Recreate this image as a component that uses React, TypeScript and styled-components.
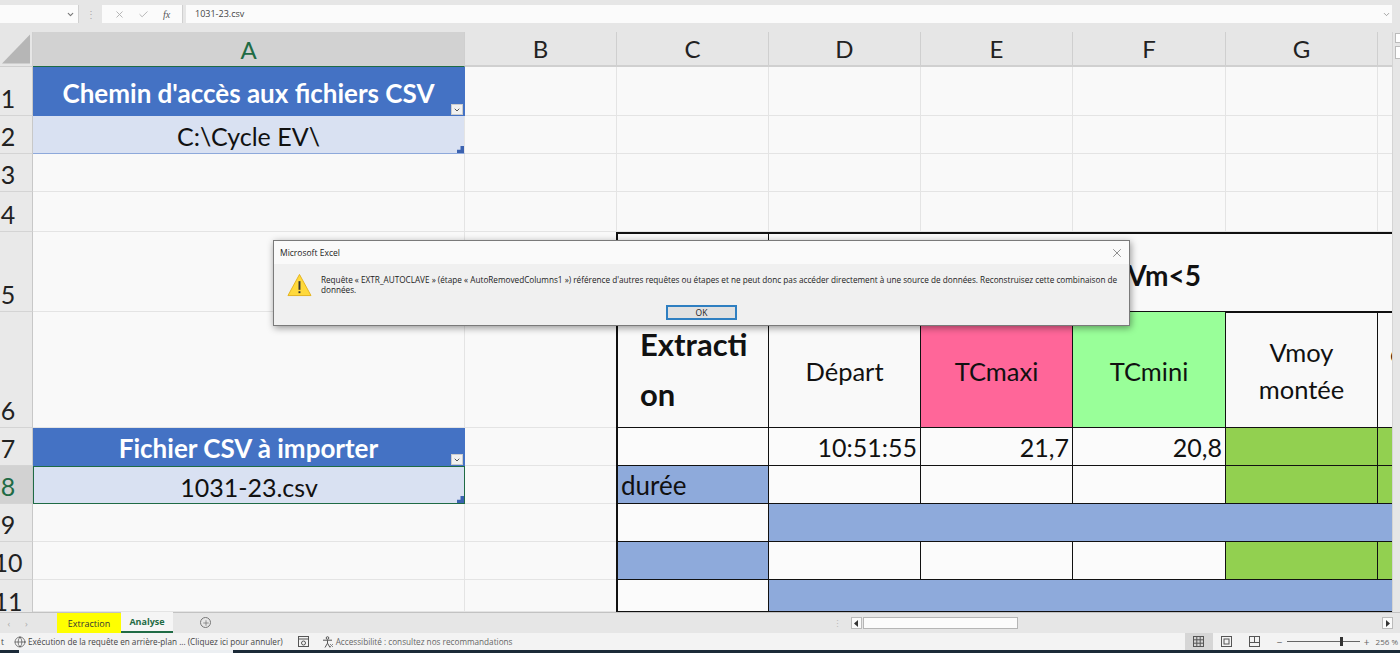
import React from "react";
import styled, { createGlobalStyle } from "styled-components";
import { Check, ChevronDown, Globe, Plus, X } from "lucide-react";

const GlobalStyle = createGlobalStyle`
	html, body {
		margin: 0;
		padding: 0;
		height: 653px;
		overflow: hidden;
		background: #e6e6e6;
	}
	* {
		box-sizing: border-box;
	}
`;

const Window = styled.div`
	position: relative;
	width: 1400px;
	height: 653px;
	display: flex;
	flex-direction: column;
	font-family: "Open Sans", "Liberation Sans", sans-serif;
	overflow: hidden;
`;

/* formula bar */
const FormulaBar = styled.div`
	height: 32px;
	flex: none;
	display: flex;
	align-items: flex-start;
	padding: 5px 8px 0 0;
	background: #e6e6e6;
`;

const NameBox = styled.div`
	width: 79px;
	height: 18px;
	background: #fbfbfb;
	border-right: 1px solid #d0d0d0;
	display: flex;
	align-items: center;
	justify-content: flex-end;
	padding-right: 3px;
	color: #777;
`;

const Grip = styled.div`
	width: 23px;
	height: 18px;
	display: flex;
	justify-content: center;
	align-items: center;
	color: #aaa;
	font-size: 10px;
`;

const FormulaButtons = styled.div`
	width: 81px;
	height: 18px;
	background: #fbfbfb;
	border-right: 1px solid #d0d0d0;
	display: flex;
	align-items: center;
	justify-content: space-around;
	padding: 0 5px;
	color: #b0b0b0;
`;

const FxLabel = styled.span`
	font-family: "Liberation Serif", serif;
	font-style: italic;
	font-size: 10px;
	color: #555;
`;

const FormulaInput = styled.div`
	flex: 1;
	height: 18px;
	margin-left: 3px;
	padding-left: 9px;
	background: #fbfbfb;
	font-size: 9px;
	line-height: 18px;
	color: #444;
	display: flex;
	justify-content: space-between;
	align-items: center;
	padding-right: 1px;
`;

/* sheet */
const SheetArea = styled.div`
	height: 580px;
	flex: none;
	display: flex;
`;

const Sheet = styled.div`
	width: 1392px;
	display: grid;
	grid-template-columns: 33px 432px 152px 152px 152px 152px 153px 152px 16px;
	grid-template-rows: 35px 49px 38px 38px 40px 80px 116px 38px 38px 38px 38px 32px;
	background: #f9f9f9;
	font-family: Lato, "Liberation Sans", sans-serif;
	overflow: hidden;
`;

const Corner = styled.div`
	background: #e6e6e6;
	border-right: 1px solid #cfcfcf;
	border-bottom: 1px solid #cfcfcf;
	display: flex;
	align-items: flex-end;
	justify-content: flex-end;
	padding: 2px;
`;

const ColumnHeader = styled.div<{ $active?: boolean }>`
	display: flex;
	align-items: center;
	justify-content: center;
	font-size: 24px;
	background: ${p => (p.$active ? "#d2d2d2" : "#e6e6e6")};
	color: ${p => (p.$active ? "#1f6b45" : "#222")};
	border-right: 1px solid #cfcfcf;
	border-bottom: ${p => (p.$active ? "1px solid #1f6b45" : "2px solid #d0d0d0")};
`;

const RowHeader = styled.div<{ $active?: boolean }>`
	display: flex;
	align-items: flex-end;
	justify-content: center;
	padding-right: 16px;
	font-size: 25px;
	line-height: 33px;
	overflow: hidden;
	background: ${p => (p.$active ? "#d2d2d2" : "#e9e9e9")};
	color: ${p => (p.$active ? "#1f6b45" : "#222")};
	border-right: 1px solid #c8c8c8;
	border-bottom: 1px solid #d4d4d4;
`;

/* last visible row runs on below the tabs, so its number sits low and is cut */
const LastRowHeader = styled(RowHeader)`
	align-items: flex-start;
	padding-top: 5px;
	border-bottom: none;
`;

const Cell = styled.div<{
	$bg?: string;
	$span?: number;
	$edge?: boolean;
	$box?: boolean;
	$thickTop?: boolean;
	$thickBottom?: boolean;
}>`
	position: relative;
	display: flex;
	align-items: center;
	font-size: 25px;
	color: #111;
	overflow: hidden;
	background: ${p => p.$bg || "transparent"};
	grid-column: span ${p => p.$span || 1};
	border-right: 1px solid ${p => (p.$box ? "#111" : "#e4e4e4")};
	border-bottom: 1px solid ${p => (p.$box ? "#111" : "#e4e4e4")};
	${p => p.$edge && "border-left: 2px solid #111; margin-left: -1px;"}
	${p => p.$thickTop && "border-top: 2px solid #111;"}
	${p => p.$thickBottom && "border-bottom: 2px solid #111; margin-bottom: -1px;"}
`;

const TableTitle = styled(Cell)`
	justify-content: center;
	background: #4472c4;
	color: #fff;
	font-weight: 700;
	font-size: 26px;
	border-color: #4472c4;
	padding-top: 3px;
`;

const TableEntry = styled(Cell)<{ $selected?: boolean }>`
	justify-content: center;
	background: #d9e1f2;
	font-size: 25px;
	padding-top: 3px;
	border-bottom: ${p => (p.$selected ? "1.5px solid #1f6b45" : "1px solid #8ea9db")};
	${p => p.$selected && "border-top: 1.5px solid #1f6b45; border-left: 1.5px solid #1f6b45; border-right: 1.5px solid #1f6b45;"}
`;

const FilterButton = styled.span`
	position: absolute;
	right: 1px;
	bottom: 0;
	width: 12px;
	height: 11px;
	background: #f1f1f1;
	border: 1px solid #ccc;
	color: #555;
	display: flex;
	align-items: center;
	justify-content: center;
`;

const ResizeHandle = styled.span`
	position: absolute;
	right: 0;
	bottom: 0;
	width: 7px;
	height: 7px;
	background: #3b62b0;
	clip-path: polygon(100% 0, 100% 100%, 0 100%, 0 55%, 50% 55%, 50% 0);
`;

const MergedTitle = styled(Cell)`
	justify-content: flex-end;
	padding-right: 192px;
	padding-top: 4px;
	font-size: 28px;
	font-weight: 700;
	color: #111;
`;

const BoldWrapped = styled(Cell)`
	font-size: 31px;
	font-weight: 700;
	line-height: 50px;
	padding: 0 0 2px 22px;
	white-space: nowrap;
`;

const ColumnTitle = styled(Cell)`
	justify-content: center;
	text-align: center;
	font-size: 25.5px;
	line-height: 37px;
	padding-top: 3px;
`;

const Value = styled(Cell)`
	justify-content: flex-end;
	padding-right: 3px;
`;

const LabelCell = styled(Cell)`
	padding-left: 3px;
	font-size: 26px;
`;

const ClippedTitle = styled(Cell)`
	padding: 0 0 33px 12px;
	font-size: 25.5px;
	white-space: nowrap;
`;

/* vertical scrollbar */
const VerticalBar = styled.div`
	width: 8px;
	background: #e6e6e6;
	border-left: 1px solid #d4d4d4;
	display: flex;
	flex-direction: column;
	gap: 3px;
	padding: 1px 0 0 2px;
`;

const VerticalThumb = styled.div<{ $size: number }>`
	height: ${p => p.$size}px;
	background: #fff;
	border: 1px solid #bbb;
	border-right: none;
`;

/* sheet tabs */
const TabsBar = styled.div`
	height: 21px;
	flex: none;
	display: flex;
	align-items: stretch;
	background: #e6e6e6;
	border-top: 1px solid #c2c2c2;
	padding-right: 7px;
`;

const TabArrows = styled.div`
	width: 57px;
	display: flex;
	justify-content: space-around;
	align-items: center;
	padding-right: 22px;
	color: #aaa;
	font-size: 9px;
`;

const SheetTab = styled.div<{ $active?: boolean; $yellow?: boolean }>`
	display: flex;
	align-items: center;
	justify-content: center;
	width: ${p => (p.$active ? "52px" : "64px")};
	font-family: "Open Sans", "Liberation Sans", sans-serif;
	font-size: 9px;
	color: ${p => (p.$active ? "#1f6b45" : "#333")};
	font-weight: ${p => (p.$active ? 700 : 400)};
	background: ${p => (p.$yellow ? "#ffff00" : p.$active ? "#f5f5f5" : "transparent")};
	border-bottom: ${p => (p.$active ? "2px solid #1f6b45" : "none")};
	margin-top: ${p => (p.$active ? "-1px" : "0")};
`;

const AddSheet = styled.div`
	width: 11px;
	height: 11px;
	margin: 4px 0 0 27px;
	border: 1px solid #777;
	border-radius: 50%;
	color: #666;
	display: flex;
	align-items: center;
	justify-content: center;
`;

const ScrollDots = styled.div`
	margin-left: 622px;
	width: 18px;
	color: #bbb;
	font-size: 9px;
	display: flex;
	align-items: center;
`;

const HorizontalTrack = styled.div`
	flex: 1;
	display: flex;
	align-items: center;
`;

const ArrowButton = styled.div`
	width: 11px;
	height: 12px;
	background: #fafafa;
	border: 1px solid #bbb;
	display: flex;
	align-items: center;
	justify-content: center;
`;

const Thumb = styled.div`
	width: 155px;
	height: 12px;
	background: #fbfbfb;
	border: 1px solid #b5b5b5;
	margin-left: 1px;
`;

const Spacer = styled.div`
	flex: 1;
`;

/* status bar */
const StatusBar = styled.div`
	height: 17px;
	flex: none;
	display: flex;
	align-items: center;
	padding-right: 2px;
	background: #f3f3f3;
	font-size: 8.2px;
	color: #444;
	white-space: nowrap;
`;

const StatusLead = styled.span`
	width: 14px;
	padding-left: 1px;
`;

const StatusText = styled.span<{ $muted?: boolean }>`
	color: ${p => (p.$muted ? "#666" : "#444")};
	margin-left: 2px;
`;

const StatusIcon = styled.span<{ $gap: number }>`
	display: flex;
	margin-left: ${p => p.$gap}px;
	color: #555;
`;

const ViewButton = styled.div<{ $active?: boolean }>`
	width: 28px;
	height: 17px;
	display: flex;
	align-items: center;
	justify-content: center;
	background: ${p => (p.$active ? "#d6d6d6" : "transparent")};
`;

const ZoomSlider = styled.div`
	position: relative;
	width: 73px;
	height: 1px;
	margin: 0 3px;
	background: #666;
`;

const ZoomThumb = styled.span`
	position: absolute;
	left: 53px;
	top: -4px;
	width: 3px;
	height: 9px;
	background: #333;
`;

const ZoomSign = styled.span`
	color: #666;
	font-size: 10px;
	width: 8px;
	text-align: center;
`;

const ZoomValue = styled.span`
	margin-left: 5px;
	font-size: 8px;
	color: #666;
`;

const Views = styled.div`
	margin-left: auto;
	display: flex;
	margin-right: 7px;
`;

/* task bar */
const TaskBar = styled.div`
	height: 3px;
	flex: none;
	display: flex;
	background: #1b2a38;
`;

const TaskWindow = styled.div`
	width: 214px;
	margin-left: 19px;
	background: #eceff2;
`;

/* dialog */
const Dialog = styled.div`
	position: absolute;
	left: 273px;
	top: 240px;
	width: 857px;
	height: 86px;
	background: #f0f0f0;
	border: 1px solid #7a7a7a;
	box-shadow: 1px 2px 7px rgba(0, 0, 0, 0.4);
	display: flex;
	flex-direction: column;
	z-index: 5;
`;

const DialogTitle = styled.div`
	height: 23px;
	flex: none;
	display: flex;
	align-items: center;
	justify-content: space-between;
	padding: 0 5px 0 6px;
	background: #fafafa;
	font-size: 8.5px;
	color: #222;
`;

const DialogBody = styled.div`
	display: flex;
	padding: 9px 8px 0 13px;
	height: 40px;
`;

const DialogMessage = styled.p`
	margin: 2px 0 0 9px;
	font-size: 8.2px;
	line-height: 10px;
	color: #222;
`;

const DialogFooter = styled.div`
	display: flex;
	justify-content: center;
	padding: 1px 0 0 0;
`;

const OkButton = styled.button`
	width: 71px;
	height: 15px;
	padding: 0;
	background: #e1e1e1;
	border: 2px solid #2f7fc1;
	font-family: inherit;
	font-size: 8.5px;
	color: #222;
`;

const PINK = "#ff6699";
const MINT = "#99ff99";
const GREEN = "#92d050";
const BLUE = "#8eaadb";
const WHITE = "#fbfbfb";

function FilterMark() {
	return (
		<FilterButton>
			<ChevronDown size={8} strokeWidth={3} />
		</FilterButton>
	);
}

function BlankCells({ count }: { count: number }) {
	return (
		<>
			{Array.from({ length: count }).map((_, i) => (
				<Cell key={i} />
			))}
		</>
	);
}

function App() {
	return (
		<Window>
			<GlobalStyle />
			<FormulaBar>
				<NameBox>
					<ChevronDown size={9} strokeWidth={3} />
				</NameBox>
				<Grip>⋮</Grip>
				<FormulaButtons>
					<X size={11} />
					<Check size={11} />
					<FxLabel>fx</FxLabel>
				</FormulaButtons>
				<FormulaInput>
					1031-23.csv
					<ChevronDown size={9} color="#888" />
				</FormulaInput>
			</FormulaBar>

			<SheetArea>
				<Sheet>
					<Corner>
						<svg width="29" height="30" viewBox="0 0 29 30">
							<polygon points="29,0 29,30 0,30" fill="#b6b6b6" />
						</svg>
					</Corner>
					<ColumnHeader $active>A</ColumnHeader>
					{["B", "C", "D", "E", "F", "G"].map(c => (
						<ColumnHeader key={c}>{c}</ColumnHeader>
					))}
					<ColumnHeader />

					<RowHeader>1</RowHeader>
					<TableTitle>
						Chemin d'accès aux fichiers CSV
						<FilterMark />
					</TableTitle>
					<BlankCells count={7} />

					<RowHeader>2</RowHeader>
					<TableEntry>
						C:\Cycle EV\
						<ResizeHandle />
					</TableEntry>
					<BlankCells count={7} />

					<RowHeader>3</RowHeader>
					<BlankCells count={8} />

					<RowHeader>4</RowHeader>
					<BlankCells count={8} />

					<RowHeader>5</RowHeader>
					<Cell />
					<Cell />
					<Cell $edge $box $thickTop />
					<MergedTitle $span={5} $thickTop $thickBottom $box>
						Vm&lt;5
					</MergedTitle>

					<RowHeader>6</RowHeader>
					<Cell />
					<Cell />
					<BoldWrapped $edge $box>
						Extracti
						<br />
						on
					</BoldWrapped>
					<ColumnTitle $box>Départ</ColumnTitle>
					<ColumnTitle $box $bg={PINK}>
						TCmaxi
					</ColumnTitle>
					<ColumnTitle $box $bg={MINT}>
						TCmini
					</ColumnTitle>
					<ColumnTitle $box>
						Vmoy
						<br />
						montée
					</ColumnTitle>
					<ClippedTitle $box>c</ClippedTitle>

					<RowHeader>7</RowHeader>
					<TableTitle>
						Fichier CSV à importer
						<FilterMark />
					</TableTitle>
					<Cell />
					<Cell $edge $box $bg={WHITE} />
					<Value $box $bg={WHITE}>
						10:51:55
					</Value>
					<Value $box $bg={WHITE}>
						21,7
					</Value>
					<Value $box $bg={WHITE}>
						20,8
					</Value>
					<Cell $box $bg={GREEN} />
					<Cell $box $bg={GREEN} />

					<RowHeader $active>8</RowHeader>
					<TableEntry $selected>
						1031-23.csv
						<ResizeHandle />
					</TableEntry>
					<Cell />
					<LabelCell $edge $box $bg={BLUE}>
						durée
					</LabelCell>
					<Cell $box $bg={WHITE} />
					<Cell $box $bg={WHITE} />
					<Cell $box $bg={WHITE} />
					<Cell $box $bg={GREEN} />
					<Cell $box $bg={GREEN} />

					<RowHeader>9</RowHeader>
					<Cell />
					<Cell />
					<Cell $edge $box $bg={WHITE} />
					<Cell $span={5} $box $bg={BLUE} />

					<RowHeader>10</RowHeader>
					<Cell />
					<Cell />
					<Cell $edge $box $bg={BLUE} />
					<Cell $box $bg={WHITE} />
					<Cell $box $bg={WHITE} />
					<Cell $box $bg={WHITE} />
					<Cell $box $bg={GREEN} />
					<Cell $box $bg={GREEN} />

					<LastRowHeader>11</LastRowHeader>
					<Cell />
					<Cell />
					<Cell $edge $box $bg={WHITE} />
					<Cell $span={5} $box $bg={BLUE} />
				</Sheet>
				<VerticalBar>
					<VerticalThumb $size={10} />
					<VerticalThumb $size={13} />
				</VerticalBar>
			</SheetArea>

			<TabsBar>
				<TabArrows>
					<span>‹</span>
					<span>›</span>
				</TabArrows>
				<SheetTab $yellow>Extraction</SheetTab>
				<SheetTab $active>Analyse</SheetTab>
				<AddSheet>
					<Plus size={8} />
				</AddSheet>
				<ScrollDots>⋮</ScrollDots>
				<HorizontalTrack>
					<ArrowButton>
						<svg width="5" height="7" viewBox="0 0 5 7">
							<polygon points="4,0 4,7 0,3.5" fill="#333" />
						</svg>
					</ArrowButton>
					<Thumb />
					<Spacer />
					<ArrowButton>
						<svg width="5" height="7" viewBox="0 0 5 7">
							<polygon points="1,0 1,7 5,3.5" fill="#333" />
						</svg>
					</ArrowButton>
				</HorizontalTrack>
			</TabsBar>

			<StatusBar>
				<StatusLead>t</StatusLead>
				<Globe size={12} strokeWidth={1.2} color="#333" />
				<StatusText>Exécution de la requête en arrière-plan ... (Cliquez ici pour annuler)</StatusText>
				<StatusIcon $gap={15}>
					<svg width="11" height="11" viewBox="0 0 11 11" fill="none" stroke="#555">
						<rect x="0.5" y="0.5" width="10" height="10" />
						<line x1="0.5" y1="3" x2="10.5" y2="3" />
						<circle cx="5.5" cy="7" r="2" />
					</svg>
				</StatusIcon>
				<StatusIcon $gap={13}>
					<svg width="12" height="12" viewBox="0 0 12 12" fill="none" stroke="#555">
						<circle cx="5.5" cy="2" r="1.3" />
						<path d="M1 4.2h9M5.5 4.2v3M5.5 7.2L3 11.5M5.5 7.2L8 11.5" />
						<path d="M8 8l3 3M11 8l-3 3" stroke="#888" />
					</svg>
				</StatusIcon>
				<StatusText $muted>Accessibilité : consultez nos recommandations</StatusText>
				<Views>
					<ViewButton $active>
						<svg width="11" height="11" viewBox="0 0 11 11" fill="none" stroke="#555">
							<rect x="0.5" y="0.5" width="10" height="10" />
							<path d="M0.5 3.8h10M0.5 7.2h10M3.8 0.5v10M7.2 0.5v10" />
						</svg>
					</ViewButton>
					<ViewButton>
						<svg width="11" height="11" viewBox="0 0 11 11" fill="none" stroke="#555">
							<rect x="0.5" y="0.5" width="10" height="10" />
							<rect x="3" y="3" width="5" height="5" />
						</svg>
					</ViewButton>
					<ViewButton>
						<svg width="11" height="11" viewBox="0 0 11 11" fill="none" stroke="#555">
							<rect x="0.5" y="0.5" width="10" height="10" />
							<path d="M0.5 6.5h10M5.5 0.5v6" />
						</svg>
					</ViewButton>
				</Views>
				<ZoomSign>−</ZoomSign>
				<ZoomSlider>
					<ZoomThumb />
				</ZoomSlider>
				<ZoomSign>+</ZoomSign>
				<ZoomValue>256 %</ZoomValue>
			</StatusBar>

			<TaskBar>
				<TaskWindow />
			</TaskBar>

			<Dialog>
				<DialogTitle>
					Microsoft Excel
					<X size={14} color="#444" strokeWidth={1} />
				</DialogTitle>
				<DialogBody>
					<svg width="26" height="24" viewBox="0 0 26 24">
						<polygon points="13,1 25,23 1,23" fill="#ffd93b" stroke="#e3b21d" strokeLinejoin="round" />
						<rect x="12" y="8" width="2" height="9" fill="#333" />
						<rect x="12" y="18.5" width="2" height="2" fill="#333" />
					</svg>
					<DialogMessage>
						Requête « EXTR_AUTOCLAVE » (étape « AutoRemovedColumns1 ») référence d'autres requêtes ou étapes et ne peut donc pas accéder directement à une source de données. Reconstruisez cette combinaison de données.
					</DialogMessage>
				</DialogBody>
				<DialogFooter>
					<OkButton>OK</OkButton>
				</DialogFooter>
			</Dialog>
		</Window>
	);
}

export default App;
